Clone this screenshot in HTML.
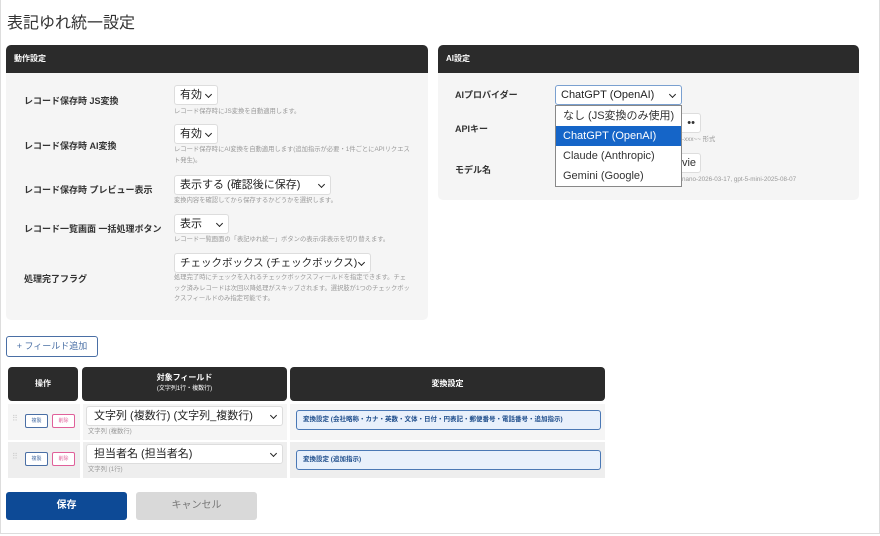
<!DOCTYPE html>
<html><head><meta charset="utf-8"><style>
*{box-sizing:border-box;margin:0;padding:0}
body{width:880px;height:536px;background:#fff;font-family:"Liberation Sans","Noto Sans CJK JP",sans-serif;position:relative;overflow:hidden;color:#333}
.a{position:absolute}
.frame{left:0;top:0;width:880px;height:534px;border:1px solid #ddd;border-top:none}
.panel{background:#f5f5f5;border-radius:5px;overflow:hidden}
.ph{background:#2b2b2b;color:#fff;font-size:8px;font-weight:bold;height:28px;line-height:28px;padding-left:8px}
.lbl{font-size:9px;font-weight:bold;color:#333}
.sel{background:#fff;border:1px solid #ddd;border-radius:3px;font-size:11px;color:#222;height:20px;line-height:18px;padding-left:5px;white-space:nowrap}
.sel:after{content:"";position:absolute;right:6px;top:6px;width:4px;height:4px;border-right:1.6px solid #222;border-bottom:1.6px solid #222;transform:rotate(45deg)}
.hint{font-size:6.3px;color:#999;line-height:10.5px}
.th{background:#2b2b2b;color:#fff;border-radius:4px;font-size:8px;font-weight:bold;text-align:center}
.sb{font-size:5px;border:1px solid #4a6fa5;color:#4a6fa5;background:#fff;border-radius:2px;text-align:center;line-height:12px;width:23px;height:14px}
.sb.r{border-color:#e0609a;color:#e0609a}
.cv{background:#e8f0fb;border:1px solid #4a78b5;border-radius:3px;color:#1f4e8c;font-size:6.5px;font-weight:bold;line-height:18px;padding-left:6px;height:20px}
</style></head><body>
<div class="a frame"></div>
<div class="a" style="left:7px;top:9px;font-size:16px;color:#333">表記ゆれ統一設定</div>

<div class="a panel" style="left:6px;top:45px;width:422px;height:275px"><div class="ph">動作設定</div></div>
<div class="a lbl" style="left:24px;top:94px">レコード保存時 JS変換</div>
<div class="a sel" style="left:174px;top:85px;width:44px">有効</div>
<div class="a hint" style="left:174px;top:107px">レコード保存時にJS変換を自動適用します。</div>
<div class="a lbl" style="left:24px;top:139px">レコード保存時 AI変換</div>
<div class="a sel" style="left:174px;top:124px;width:44px">有効</div>
<div class="a hint" style="left:174px;top:145px;width:236px">レコード保存時にAI変換を自動適用します(追加指示が必要・1件ごとにAPIリクエスト発生)。</div>
<div class="a lbl" style="left:24px;top:183px">レコード保存時 プレビュー表示</div>
<div class="a sel" style="left:174px;top:175px;width:157px">表示する (確認後に保存)</div>
<div class="a hint" style="left:174px;top:196px">変換内容を確認してから保存するかどうかを選択します。</div>
<div class="a lbl" style="left:24px;top:222px">レコード一覧画面 一括処理ボタン</div>
<div class="a sel" style="left:174px;top:214px;width:55px">表示</div>
<div class="a hint" style="left:174px;top:235px">レコード一覧画面の「表記ゆれ統一」ボタンの表示/非表示を切り替えます。</div>
<div class="a lbl" style="left:24px;top:272px">処理完了フラグ</div>
<div class="a sel" style="left:174px;top:253px;width:197px;font-size:10.5px">チェックボックス (チェックボックス)</div>
<div class="a hint" style="left:174px;top:273px;width:236px">処理完了時にチェックを入れるチェックボックスフィールドを指定できます。チェック済みレコードは次回以降処理がスキップされます。選択肢が1つのチェックボックスフィールドのみ指定可能です。</div>

<div class="a panel" style="left:438px;top:45px;width:421px;height:155px"><div class="ph">AI設定</div></div>
<div class="a lbl" style="left:455px;top:88px">AIプロバイダー</div>
<div class="a lbl" style="left:455px;top:122px">APIキー</div>
<div class="a lbl" style="left:455px;top:163px">モデル名</div>
<div class="a" style="left:660px;top:113px;width:41px;height:20px;background:#fff;border:1px solid #ddd;border-radius:3px;text-align:right;padding-right:5px;font-size:11px;line-height:18px">••</div>
<div class="a hint" style="left:682px;top:135px">-xxx~~ 形式</div>
<div class="a" style="left:660px;top:153px;width:41px;height:20px;background:#fff;border:1px solid #ddd;border-radius:3px;text-align:right;padding-right:4px;font-size:11px;line-height:18px">vie</div>
<div class="a hint" style="left:682px;top:175px">nano-2026-03-17, gpt-5-mini-2025-08-07</div>
<div class="a sel" style="left:555px;top:85px;width:127px;border-color:#7aa0d0">ChatGPT (OpenAI)</div>
<div class="a" style="left:555px;top:105px;width:127px;height:82px;background:#fff;border:1px solid #888;font-size:11px;line-height:20px">
<div style="padding-left:7px">なし (JS変換のみ使用)</div>
<div style="padding-left:7px;background:#1565c8;color:#fff">ChatGPT (OpenAI)</div>
<div style="padding-left:7px">Claude (Anthropic)</div>
<div style="padding-left:7px">Gemini (Google)</div></div>

<div class="a" style="left:6px;top:336px;width:92px;height:21px;border:1px solid #4a6fa5;border-radius:3px;font-size:9px;color:#4a6fa5;text-align:center;line-height:19px">+ フィールド追加</div>

<div class="a th" style="left:8px;top:367px;width:70px;height:34px;line-height:34px">操作</div>
<div class="a th" style="left:82px;top:367px;width:205px;height:34px;padding-top:6px;line-height:10px">対象フィールド<br><span style="font-size:6px;font-weight:normal">(文字列1行・複数行)</span></div>
<div class="a th" style="left:290px;top:367px;width:315px;height:34px;line-height:34px">変換設定</div>

<div class="a" style="left:8px;top:404px;width:597px;height:36px;background:#f5f5f5"></div>
<div class="a" style="left:8px;top:442px;width:597px;height:36px;background:#eee"></div>
<div class="a" style="left:80px;top:404px;width:3px;height:74px;background:#fff"></div>
<div class="a" style="left:287px;top:404px;width:3px;height:74px;background:#fff"></div>
<div class="a" style="left:12px;top:414px;font-size:8px;color:#ccc">⠿</div>
<div class="a" style="left:12px;top:452px;font-size:8px;color:#ccc">⠿</div>
<div class="a sb" style="left:25px;top:414px">複製</div><div class="a sb r" style="left:52px;top:414px">削除</div>
<div class="a sb" style="left:25px;top:452px">複製</div><div class="a sb r" style="left:52px;top:452px">削除</div>
<div class="a sel" style="left:86px;top:406px;width:197px;padding-left:7px">文字列 (複数行) (文字列_複数行)</div>
<div class="a hint" style="left:88px;top:427px">文字列 (複数行)</div>
<div class="a sel" style="left:86px;top:444px;width:197px;padding-left:7px">担当者名 (担当者名)</div>
<div class="a hint" style="left:88px;top:465px">文字列 (1行)</div>
<div class="a cv" style="left:296px;top:410px;width:305px">変換設定 (会社略称・カナ・英数・文体・日付・円表記・郵便番号・電話番号・追加指示)</div>
<div class="a cv" style="left:296px;top:450px;width:305px">変換設定 (追加指示)</div>

<div class="a" style="left:6px;top:492px;width:121px;height:28px;background:#0d4a96;border-radius:3px;color:#fff;font-size:10px;font-weight:bold;text-align:center;line-height:28px">保存</div>
<div class="a" style="left:136px;top:492px;width:121px;height:28px;background:#d9d9d9;border-radius:3px;color:#777;font-size:10px;text-align:center;line-height:28px">キャンセル</div>
</body></html>
